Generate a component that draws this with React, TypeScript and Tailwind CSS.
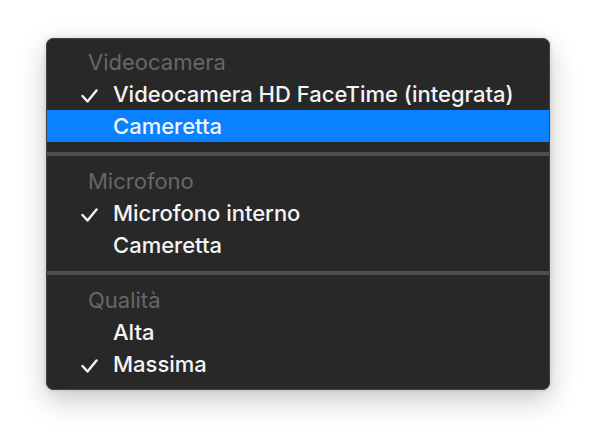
type Item = { label: string; checked?: boolean; active?: boolean };

interface Section {
  title: string;
  items: Item[];
}

const sections: Section[] = [
  {
    title: 'Videocamera',
    items: [
      { label: 'Videocamera HD FaceTime (integrata)', checked: true },
      { label: 'Cameretta', active: true },
    ],
  },
  {
    title: 'Microfono',
    items: [
      { label: 'Microfono interno', checked: true },
      { label: 'Cameretta' },
    ],
  },
  {
    title: 'Qualità',
    items: [{ label: 'Alta' }, { label: 'Massima', checked: true }],
  },
];

const Check = () => (
  <svg width="17" height="14" viewBox="0 0 17 14" className="absolute left-[34px] top-[11px]">
    <path d="M1.5 7 L6.5 12.5 L15.5 1.5" fill="none" stroke="#f4f4f4" strokeWidth="2.4" strokeLinecap="round" strokeLinejoin="round" />
  </svg>
);

const MenuRow = ({ label, checked, active }: Item) => (
  <div className={`relative flex h-8 items-center pl-[66px] ${active ? 'bg-[#0a82ff]' : ''}`}>
    {checked && <Check />}
    <span className="text-[22px] font-medium leading-none text-[#f4f4f4]">{label}</span>
  </div>
);

export default function App() {
  return (
    <div className="min-h-[444px] w-full bg-white pl-[46px] pt-[38px]" style={{ fontFamily: 'Inter, "Noto Sans", sans-serif' }}>
      <div className="flex h-[352px] w-[504px] flex-col overflow-hidden rounded-[7px] border border-[#444444] bg-[#282828] pb-[9px] pt-[7px] shadow-[0_10px_28px_rgba(0,0,0,0.22),0_0_4px_rgba(0,0,0,0.15)]">
        {sections.map((section, i) => (
          <div key={section.title}>
            {i > 0 && <div className="mb-[9px] mt-[10px] h-1 bg-[#4e4e4e]" />}
            <div className="flex h-8 items-center pl-[41px]">
              <span className="text-[22px] leading-none text-[#676767]">{section.title}</span>
            </div>
            {section.items.map((item, j) => (
              <MenuRow key={j} {...item} />
            ))}
          </div>
        ))}
      </div>
    </div>
  );
}
